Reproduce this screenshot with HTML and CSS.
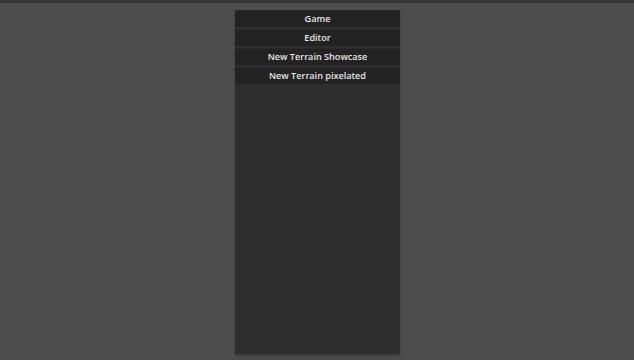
FILE: index.html
```html
<!DOCTYPE html>
<html>
<head>
<meta charset="UTF-8">
<title>Scenes</title>
<link rel="stylesheet" href="styles.css">
</head>
<body>
<div class="top-bar"></div>
<div class="scene-list">
  <div class="scene-button">Game</div>
  <div class="scene-button">Editor</div>
  <div class="scene-button">New Terrain Showcase</div>
  <div class="scene-button">New Terrain pixelated</div>
</div>
</body>
</html>
```

FILE: styles.css
```css
body {
  margin: 0;
  height: 360px;
  background-color: #4d4d4d;
  font-family: "Open Sans", sans-serif;
  color: #e6e6e6;
  overflow: hidden;
}
.top-bar {
  height: 3px;
  background-color: #363636;
}
.scene-list {
  width: 165px;
  height: 344px;
  margin: 7px 0 0 235px;
  background-color: #2e2e2e;
  box-shadow: 0 2px 2px rgba(0, 0, 0, 0.25);
  display: flex;
  flex-direction: column;
  gap: 2px;
}
.scene-button {
  height: 17px;
  padding-bottom: 1px;
  background-color: #232323;
  border-top: 1px solid #2a2a2a;
  box-sizing: border-box;
  display: flex;
  justify-content: center;
  align-items: center;
  font-size: 9.1px;
  font-weight: 600;
  line-height: 1;
}
```
